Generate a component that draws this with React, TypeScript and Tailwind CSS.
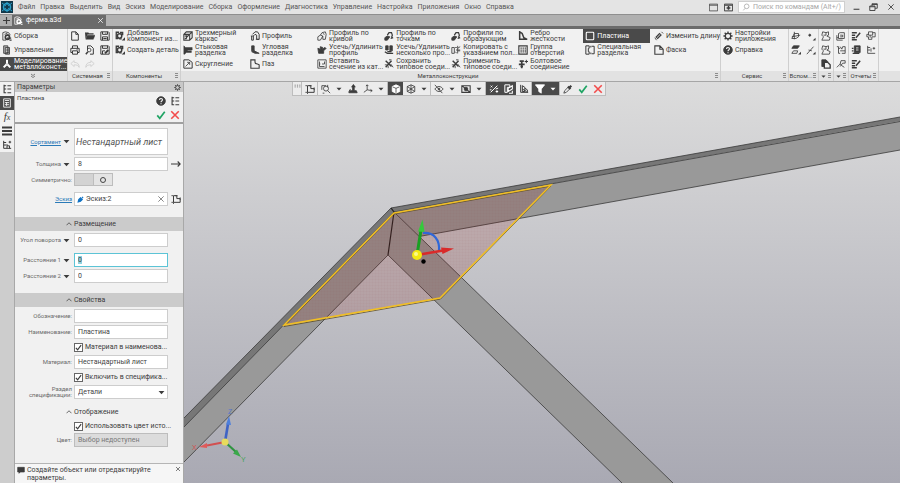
import { useState, type ReactNode } from "react";
import clsx from "clsx";

// иконки 12x12, обводка и заливка через currentColor
const icons: Record<string, ReactNode> = {
  assembly: (
    <>
      <path d="M1 11V2l3-1 4 1 2 3M1 11h4M3 4l3-1 2 2" />
      <circle cx="6.500" cy="7.500" r="2.500" strokeWidth="2" />
      <path d="M6 8.500h5M9 11h2.500" strokeWidth="1.500" />
    </>
  ),
  manage: (
    <>
      <path d="M2 1h5v9H2zM4 3v8h5V3z" fill="currentColor" fillOpacity=".35" />
      <path d="M5 5h3M5 7h3M5 9h3" />
    </>
  ),
  metal: (
    <>
      <path d="M6 1v5L2 10M6 6l4 4" strokeWidth="2.400" />
      <circle cx="6" cy="6" r="1" fill="#4a4a4a" />
    </>
  ),
  file: <path d="M2 1h5l3 3v7H2zM7 1v3h3" strokeWidth="1.200" />,
  folder: (
    <path d="M0 2h4l1 1h5v1H3L1 9zM3 5h9l-2 5H1z" fill="currentColor" strokeWidth=".5" />
  ),
  save: (
    <>
      <path d="M1 1h9l1 1v9H1zM3 1v3h6V1M3 11V7h6v4M4 9h4" strokeWidth="1.200" />
      <path d="M7 2v1" strokeWidth="1.500" />
    </>
  ),
  saveAs: (
    <>
      <path d="M1 1h9l1 1v9H1zM3 1v3h6V1M3 11V7h3" strokeWidth="1.200" />
      <path d="M6 10l4-4" strokeWidth="2.400" />
    </>
  ),
  print: <path d="M3 4V1h6v3M3 9H1V4h10v5H9M3 7h6v4H3zM8 5.500h1" strokeWidth="1.200" />,
  preview: (
    <>
      <path d="M3 6V1h4l3 3v7H6" strokeWidth="1.200" />
      <circle cx="5" cy="6" r="2.200" />
      <path d="M3.500 8L1 11" strokeWidth="1.800" />
    </>
  ),
  undo: <path d="M5 2L1 5.500 5 9V7c3 0 5 .500 6 3 0-4-2-6-6-6z" />,
  redo: <path d="M7 2l4 3.500L7 9V7c-3 0-5 .500-6 3 0-4 2-6 6-6z" />,
  gearAdd: (
    <>
      <path d="M5 1.500H1.500V9H4" strokeWidth="1.600" />
      <circle cx="5.500" cy="6" r="2.600" strokeWidth="1.800" />
      <path d="M6 1h4v4H8V3H6zM8 11.500h4v-4z" fill="currentColor" stroke="none" />
      <path d="M5 9.500h3" strokeWidth="1.500" />
    </>
  ),
  frame3d: (
    <>
      <path d="M1 4l3-3h7v7l-3 3H1zM1 4h7v7M8 4l3-3" strokeWidth="1.300" />
      <path d="M2 10l5-5M2 6h4M4 5v5" strokeWidth="1.300" />
    </>
  ),
  joint: (
    <path d="M1 1l2 2h8v3H6l-1 1h5v2H4l-2 2H1z" fill="currentColor" strokeWidth=".6" />
  ),
  fillet: (
    <>
      <path d="M1 1h6l4 3v7H1z" strokeWidth="1.200" />
      <path d="M3 9l5-5M5 4h3v3" />
    </>
  ),
  profile: (
    <>
      <path d="M3 4l3-3h3l2 3v6H8V5L6 4 4 6v5H2V6" strokeWidth="1.200" />
      <path d="M1 6h3M7 10h4" />
    </>
  ),
  corner: (
    <>
      <path d="M2 1h3v6H2z" fill="currentColor" />
      <path d="M2 8l3-1 6 3H6z" fill="currentColor" />
    </>
  ),
  groove: <path d="M1 1h5v3c0 2 2 2 3 2l2 1v4H1z" strokeWidth="1.300" />,
  curve: (
    <path d="M1 7l3-2 3 1-3 5H1zM4 5l2-3 4-1 1 3-1 6H7V6M7 3l2 1" />
  ),
  points: (
    <>
      <path d="M1 8l3-2 3 1-3 4H1z" fill="currentColor" />
      <path d="M4 5l2-3h3l1 3-1 3M8 9l3-1" strokeWidth="1.500" />
    </>
  ),
  trim: <path d="M1 4l3 1V2l3 1-1 3 3-3 2 1-3 3v3H2z" fill="currentColor" />,
  trimMany: (
    <>
      <path d="M2 1h3v5H2zM7 1h3v6H7z" fill="currentColor" />
      <path d="M1 8l3 2h7M4 8h5" strokeWidth="1.500" />
    </>
  ),
  insert: <path d="M1 1h10v10H1zM3 3v6h6M6 6h3V3M3 6h1" />,
  tools: (
    <>
      <path d="M2 2l7 7M9 2L2 10" strokeWidth="1.700" />
      <path d="M6 1h3M1 7h3M8 6l3 4M5 8v3" />
    </>
  ),
  copyPt: <path d="M1 3h3v7H1zM5 3h2M8 1v9M8 4l3-2M8 7h3M5 8l2 2M6 6h5" />,
  rib: <path d="M2 1v9h9L7 8 5 3z" strokeWidth="1.800" />,
  holes: (
    <>
      <path d="M1 1h10v10H1z" strokeWidth="1.400" />
      <path d="M3 3.700h1.500M5.500 3.700H7M8 3.700h1.500M3 6h1.500M5.500 6H7M8 6h1.500M3 8.300h1.500M5.500 8.300H7M8 8.300h1.500" strokeWidth="1.500" />
    </>
  ),
  bolt: (
    <>
      <path d="M2 2.500h5M4.500 3v8M1 6.500h7M3 9h3" strokeWidth="2" />
      <path d="M8 3h4M10 1v4" strokeWidth="1.200" />
    </>
  ),
  plate: <rect x="1.500" y="1.500" width="9" height="9" rx="1" strokeWidth="1.300" />,
  special: <path d="M5 1H1v10h4V8H4V4h1zM8 1.500h3v9H8M7 1v2M7 9v2" strokeWidth="1.200" />,
  length: (
    <>
      <path d="M3 8.500l5-5" strokeWidth="4" />
      <path d="M3.500 8l4-4" stroke="#f1f1f1" />
      <path d="M9 1l2 2M1 8l2 3" />
    </>
  ),
  chamfer: <path d="M1 1h6l4 4v6H1zM7 1v4h4" strokeWidth="1.300" />,
  gear: (
    <>
      <circle cx="6" cy="6" r="3.300" strokeWidth="1.500" />
      <path d="M6 .500v2M6 9.500v2M.500 6h2M9.500 6h2M2 2l1.500 1.500M8.500 8.500L10 10M10 2L8.500 3.500M3.500 8.500L2 10" strokeWidth="1.600" />
    </>
  ),
  help: (
    <>
      <circle cx="6" cy="6" r="5.200" fill="currentColor" />
      <path d="M4.300 4.700C4.300 2.300 8 2.500 7.700 4.800 7.500 6 6 6 6 7.500M6 8.600v1.200" stroke="#f1f1f1" strokeWidth="1.400" />
    </>
  ),
  plane: <path d="M4 1v9M1 7l10-2M4 3h5v4L6 9H1l3-6" />,
  dot: (
    <>
      <circle cx="4.500" cy="5" r="1.200" fill="currentColor" />
      <path d="M11.500 8v3.500H8z" fill="currentColor" stroke="none" />
    </>
  ),
  planes: (
    <>
      <path d="M3 1h7L8 4H1z" fill="currentColor" />
      <path d="M3 7h5l-1 3H1z" />
      <path d="M12 8v3.500H8.500z" fill="currentColor" stroke="none" />
    </>
  ),
  axis: (
    <>
      <path d="M1 11l8-9M3 6l4 1" />
      <path d="M11.500 8v3.500H8z" fill="currentColor" stroke="none" />
    </>
  ),
  shape: <path d="M2 1l4 1 3-1v4L7 6l4 2-1 3H1l2-4-2-2zM6 2v3H3" />,
  solid: (
    <>
      <path d="M1 1h5l2 2v6H1z" fill="currentColor" />
      <path d="M4 4h4l3 3v4H4z" fill="#f1f1f1" strokeWidth="1.600" />
    </>
  ),
  dims: <path d="M1 5v6h7M3 3v6h7V2H5zM5 5h3v2H5M1 8h2" />,
  sheet: <path d="M1 2h2v8h2M3 4h2M5 2l2 3 1-3h3v8H7M5 7h6" />,
  branch: <path d="M1 10l4-4 2 2 3 2M5 6l1-4h5v3H8L5 9" />,
  report: (
    <>
      <path d="M1 2h6M1 5h4M1 8h4M1 10.500h6" strokeWidth="1.700" />
      <path d="M6 8l5-6" strokeWidth="1.800" />
    </>
  ),
  reportSave: (
    <>
      <path d="M4 1h7v8H4z" fill="currentColor" />
      <path d="M1 4h2M1 7h2M2 10h8" strokeWidth="1.500" />
      <path d="M6 3.500h3M6 6h3" stroke="#f1f1f1" />
    </>
  ),
  reportCopy: <path d="M3 1h5v4H3zM8 2h3v5H7v3H3V7H1V4h2M5 5v3" />,
  reportAdd: <path d="M2 1v9h9M2 3h3M2 6h3M6 8V4M8 4h3M9.500 2.500v3" />,
  tree: <path d="M2.500 1v9.500H5M2.500 2H5M2.500 6H5M6.500 2H11M6.500 6H11M6.500 10.500H11" strokeWidth="1.300" />,
  table: <path d="M2 1h8v10H2zM3.500 3h5M3.500 5.500h5M3.500 8h5M5.500 5v4.500" />,
  layers: <path d="M0 1.800h12M0 6h12M0 10.200h12" strokeWidth="2.600" />,
  treeAdd: <path d="M2 1v9h9M2 3h3M2 6h3M6 5v5M9 10V7H6M8 2.500h3M9.500 1v3" strokeWidth="1.200" />,
  sketch: (
    <>
      <path d="M3 2v8h8V5.500H7V2z" strokeWidth="1.200" />
      <path d="M.500 2h2M3 10v2M.500 10h2M5 2h3M11 4v3" />
    </>
  ),
  find: (
    <>
      <path d="M1 2h5M1 2v5M8 1v3M2 11h2" />
      <circle cx="6" cy="5.500" r="3" />
      <path d="M8 8l3 3" />
    </>
  ),
  orient: (
    <>
      <path d="M6.500 0l3 4H8v4H5V4H3.500z" fill="currentColor" stroke="none" />
      <path d="M2 8h8l1 2.500H1z" fill="currentColor" />
      <path d="M3 6L1 9" />
    </>
  ),
  triad: <path d="M5 1v6l-4 3M5 7l6 1M3.500 2.500L5 1l1.500 1.500M9 6.500L11 8l-2 1.500" />,
  cube: (
    <>
      <path d="M1.500 3L6 1l4.500 2v6L6 11 1.500 9z" fill="currentColor" />
      <path d="M2 3.500L6 5.200l4-1.700M6 5v5.500" stroke="#4a4a4a" />
    </>
  ),
  wire: <path d="M1.500 3L6 1l4.500 2v6L6 11 1.500 9zM1.500 3l9 6M10.500 3l-9 6M6 1v10" />,
  eyeOff: (
    <>
      <path d="M1 6c3-4 7-4 10 0-3 4-7 4-10 0zM1 1l9 10" />
      <circle cx="6" cy="6" r="1" fill="currentColor" />
    </>
  ),
  section: (
    <>
      <path d="M1 2h10v8H1zM1 2l10 8" strokeWidth="1.300" />
      <circle cx="6" cy="6" r="2.200" fill="currentColor" />
    </>
  ),
  snap: <path d="M2 10l8-8M2 2l2 2M4 2L2 4M8 9h3M9.500 7.500v3M1 7h2M8 6l3-1" strokeWidth="1.200" />,
  rebuild: (
    <>
      <path d="M1 1h6v3H4v6H1z" strokeWidth="1.200" />
      <path d="M5 5l5-3v4L5 9zM6 11h4V8" strokeWidth="1.300" />
    </>
  ),
  layersOn: <path d="M2 1v9h9M4 2l3 2v5H4zM7 5l3 2v3M4 6l5 3" strokeWidth="1.200" />,
  filter: <path d="M.500 1h11L7.500 6v5L4.500 9V6z" fill="currentColor" />,
  dropper: (
    <>
      <path d="M1 11l1-3 4-4 2 2-4 4z" />
      <path d="M6 3l3 3M8 4l2-2" strokeWidth="2.500" />
    </>
  ),
  ok: <path d="M1.500 6.500l3 3.500 6-8" strokeWidth="2" />,
  cancel: <path d="M1.500 1.500l9 9M10.500 1.500l-9 9" strokeWidth="1.900" />,
  close: <path d="M2 2l8 8M10 2l-8 8" strokeWidth="1.300" />,
  arrow: <path d="M0 6h11M8 3l3 3-3 3" strokeWidth="1.300" />,
  up: <path d="M1 8.500l5-5 5 5" strokeWidth="1.500" />,
  more: <path d="M2 2l4 3 4-3M2 6l4 3 4-3" strokeWidth="1.200" />,
  down: <path d="M1 3.500h10L6 9z" fill="currentColor" stroke="none" />,
  pencil: <path d="M2 10l1-4 3-3 3 3-3 3zM8.500 1.500l2 2" fill="currentColor" strokeWidth="2" />,
  message: <path d="M1 2h10v7H5l-2 2V9H1z" fill="currentColor" />,
  window: <path d="M.500 1.500h11v9H.500zM.500 3h11" />,
  camera: (
    <>
      <path d="M.500 1.500h11v9H.500zM1 3h10" strokeWidth="1.300" />
      <path d="M6 4v5M3.500 6.500h5" strokeWidth="2" />
    </>
  ),
  search: (
    <>
      <circle cx="7" cy="5" r="3.500" />
      <path d="M4.500 8L2 11" />
    </>
  ),
  restore: <path d="M1 4h7v6H1zM1 5h7M4 4V1h7v6H8M4 2h7" strokeWidth="1.200" />,
  minimize: <path d="M1 9h10" strokeWidth="1.800" />,
  plus: <path d="M6 0v12M0 6h12" strokeWidth="2" />,
  grip: <path d="M1 2h2M5 2h2M9 2h2M1 5h2M5 5h2M9 5h2" />,
};

const Icon = ({ name, className = "size-[10px]" }: { name: string; className?: string }) => (
  <svg
    viewBox="0 0 12 12"
    fill="none"
    stroke="currentColor"
    strokeWidth="1"
    aria-hidden="true"
    className={clsx("shrink-0", className)}
  >
    {icons[name]}
  </svg>
);

const Grip = () => (
  <svg viewBox="0 0 3 6" className="h-[6px] w-[3px] shrink-0 text-[#8c8c8c]" aria-hidden="true">
    <path d="M0 .500h3M0 2.500h3M0 4.500h3" stroke="currentColor" />
  </svg>
);

const menu = [
  "Файл", "Правка", "Выделить", "Вид", "Эскиз", "Моделирование", "Сборка", "Оформление",
  "Диагностика", "Управление", "Настройка", "Приложения", "Окно", "Справка",
];

type Cmd = { icon: string; text: string; active?: boolean };

const components: Cmd[] = [
  { icon: "gearAdd", text: "Добавить\nкомпонент из..." },
  { icon: "gearAdd", text: "Создать деталь" },
];

const metal: Cmd[] = [
  { icon: "frame3d", text: "Трехмерный\nкаркас" },
  { icon: "joint", text: "Стыковая\nразделка" },
  { icon: "fillet", text: "Скругление" },
  { icon: "profile", text: "Профиль" },
  { icon: "corner", text: "Угловая\nразделка" },
  { icon: "groove", text: "Паз" },
  { icon: "curve", text: "Профиль по\nкривой" },
  { icon: "trim", text: "Усечь/Удлинить\nпрофиль" },
  { icon: "insert", text: "Вставить\nсечение из кат..." },
  { icon: "points", text: "Профиль по\nточкам" },
  { icon: "trimMany", text: "Усечь/Удлинить\nнесколько про..." },
  { icon: "tools", text: "Сохранить\nтиповое соеди..." },
  { icon: "points", text: "Профили по\nобразующим" },
  { icon: "copyPt", text: "Копировать с\nуказанием пол..." },
  { icon: "tools", text: "Применить\nтиповое соеди..." },
  { icon: "rib", text: "Ребро\nжесткости" },
  { icon: "holes", text: "Группа\nотверстий" },
  { icon: "bolt", text: "Болтовое\nсоединение" },
];

const metalTail: Cmd[] = [
  { icon: "plate", text: "Пластина", active: true },
  { icon: "special", text: "Специальная\nразделка" },
];

const metalEdit: Cmd[] = [
  { icon: "length", text: "Изменить длину" },
  { icon: "chamfer", text: "Фаска" },
];

const service: Cmd[] = [
  { icon: "gear", text: "Настройки\nприложения" },
  { icon: "help", text: "Справка" },
];

const Command = ({ icon, text, active }: Cmd) => (
  <button
    className={clsx(
      "flex h-[14px] w-full items-center gap-[2px] pl-[2px] text-left leading-[6px] whitespace-pre",
      active && "bg-[#4a4a4a] text-white",
    )}
  >
    <Icon name={icon} />
    {text}
  </button>
);

type GroupProps = { title: ReactNode; className?: string; children: ReactNode; grip?: boolean };

const Group = ({ title, className, children, grip = true }: GroupProps) => (
  <section className={clsx("flex shrink-0 flex-col border-r border-[#cfcfcf]", className)}>
    <div className="flex h-[42px]">{children}</div>
    <div className="flex h-[10px] items-center bg-[#e2e2e2] pr-[2px] text-[6px] leading-[8px]">
      <span className="flex flex-1 justify-center whitespace-nowrap">{title}</span>
      {grip && <Grip />}
    </div>
  </section>
);

const IconGrid = ({ names, className }: { names: string[]; className: string }) => (
  <div className={clsx("grid flex-1 grid-rows-[14px_14px_14px] place-items-center", className)}>
    {names.map((name, i) => (
      <button key={i} aria-label={name} className={clsx(["undo", "redo"].includes(name) && "text-[#cccccc]")}>
        <Icon name={name} />
      </button>
    ))}
  </div>
);

const Ribbon = () => (
  <div className="flex overflow-hidden border-b border-[#a6a6a6] bg-[#f1f1f1]">
    <Group title={<Icon name="more" className="size-[6px]" />} className="w-[68px]" grip={false}>
      <div className="flex-1">
        <Command icon="assembly" text="Сборка" />
        <Command icon="manage" text="Управление" />
        <Command icon="metal" text={"Моделирование\nметаллоконст..."} active />
      </div>
    </Group>
    <Group title="Системная" className="w-[45px]">
      <IconGrid
        className="grid-cols-3"
        names={["file", "folder", "save", "print", "preview", "saveAs", "undo", "redo"]}
      />
    </Group>
    <Group title="Компоненты" className="w-[68px]">
      <div className="flex-1">
        {components.map((c) => <Command key={c.text} {...c} />)}
      </div>
    </Group>
    <Group title="Металлоконструкции" className="w-[540px]">
      <div className="grid w-[405px] grid-flow-col grid-cols-6 grid-rows-3">
        {metal.map((c) => <Command key={c.text} {...c} />)}
      </div>
      <div className="w-[67px]">
        {metalTail.map((c) => <Command key={c.text} {...c} />)}
      </div>
      <div className="flex-1 pl-[2px]">
        {metalEdit.map((c) => <Command key={c.text} {...c} />)}
      </div>
    </Group>
    <Group title="Сервис" className="w-[68px]">
      <div className="flex-1">
        {service.map((c) => <Command key={c.text} {...c} />)}
      </div>
    </Group>
    <Group title="Вспом..." className="w-[30px]">
      <IconGrid className="grid-cols-2" names={["plane", "dot", "planes", "axis"]} />
    </Group>
    <Group title={<Icon name="down" className="size-[5px]" />} className="w-[15px]">
      <IconGrid className="grid-cols-1" names={["shape", "shape", "solid"]} />
    </Group>
    <Group title={<Icon name="down" className="size-[5px]" />} className="w-[15px]">
      <IconGrid className="grid-cols-1" names={["dims", "sheet", "branch"]} />
    </Group>
    <Group title="Отчеты" className="w-[30px]">
      <IconGrid
        className="grid-cols-2"
        names={["report", "reportCopy", "reportSave", "reportAdd", "report"]}
      />
    </Group>
    <div className="flex flex-1 flex-col justify-end">
      <div className="h-[10px] bg-[#e2e2e2]" />
    </div>
  </div>
);

const inputClass = "h-[14px] w-full min-w-0 border border-[#cdcdcd] bg-white px-[3px] text-[#444]";

type FieldProps = {
  id: string;
  label: string;
  link?: boolean;
  arrow?: boolean;
  after?: ReactNode;
  children: ReactNode;
};

const Field = ({ id, label, link, arrow, after, children }: FieldProps) => (
  <div className="flex items-center">
    <div className="mr-[2px] flex w-[57px] shrink-0 items-center justify-end gap-[2px]">
      <label
        htmlFor={id}
        className={clsx(
          "text-right text-[6px] leading-[6px] whitespace-pre",
          link ? "text-[#2a7ab8] underline" : "text-[#6a6a6a]",
        )}
      >
        {label}
      </label>
      {arrow && <Icon name="down" className="mr-[2px] size-[7px]" />}
    </div>
    <div className="min-w-0 flex-1">{children}</div>
    <div className="flex w-[15px] shrink-0 justify-center">{after}</div>
  </div>
);

const TextField = ({ value = "", ...rest }: Omit<FieldProps, "children"> & { value?: string }) => (
  <Field {...rest}>
    <input id={rest.id} type="text" defaultValue={value} className={inputClass} />
  </Field>
);

const Check = ({ text }: { text: string }) => {
  const [on, setOn] = useState(true);
  return (
    <label className="ml-[59px] flex h-[10px] items-center gap-[2px] whitespace-nowrap">
      <span className="grid shrink-0 place-items-center">
        <input
          type="checkbox"
          checked={on}
          onChange={() => setOn(!on)}
          className="col-start-1 row-start-1 size-[9px] appearance-none border border-[#666] bg-white"
        />
        {on && <Icon name="ok" className="pointer-events-none col-start-1 row-start-1 size-[7px]" />}
      </span>
      {text}
    </label>
  );
};

const SectionTitle = ({ text, plain }: { text: string; plain?: boolean }) => (
  <button
    className={clsx(
      "flex w-full items-center gap-[2px] pl-[51px]",
      plain ? "h-[10px]" : "h-[14px] bg-[#cbcbcb]",
    )}
  >
    <Icon name="up" className="size-[6px]" />
    {text}
  </button>
);

const Params = () => (
  <aside className="flex w-[170px] shrink-0 flex-col border-x border-[#a8a8a8] bg-[#f1f1f1]">
    <div className="flex h-[10px] items-center justify-between bg-[#c8c8c8] px-[2px]">
      <h2>Параметры</h2>
      <Icon name="gear" className="size-[7px]" />
    </div>
    <div className="flex h-[32px] justify-between border-b-2 border-[#a0a0a0] pt-[2px] pr-[3px] pl-[2px]">
      <h3 className="text-[6px] leading-[8px]">Пластина</h3>
      <div className="grid grid-cols-2 place-items-center gap-x-[4px]">
        <button aria-label="Справка"><Icon name="help" /></button>
        <button aria-label="Дерево"><Icon name="tree" /></button>
        <button aria-label="Создать" className="text-[#20a464]"><Icon name="ok" /></button>
        <button aria-label="Отмена" className="text-[#f24b4b]"><Icon name="cancel" /></button>
      </div>
    </div>

    <div className="flex flex-col gap-[2px] pt-[4px] pb-[11px]">
      <Field id="assortment" label="Сортамент" link arrow>
        <input
          id="assortment"
          readOnly
          value="Нестандартный лист"
          className="h-[27px] w-full border border-[#cdcdcd] bg-white px-[1px] text-[9px] text-[#555] italic"
        />
      </Field>
      <TextField id="thickness" label="Толщина" arrow value="8" after={<Icon name="arrow" />} />
      <Field id="symmetry" label="Симметрично:">
        <button
          id="symmetry"
          role="switch"
          aria-checked="false"
          className="flex h-[13px] w-[39px] border border-[#bdbdbd] bg-[#d3d3d3]"
        >
          <span className="ml-auto flex h-full w-[19px] items-center justify-center border-l border-[#bdbdbd] bg-[#e4e4e4]">
            <span className="size-[6px] rounded-full border border-[#444]" />
          </span>
        </button>
      </Field>
      <div className="pt-[4px]">
        <Field id="sketch" label="Эскиз" link after={<Icon name="sketch" />}>
          <div className="flex h-[14px] items-center gap-[2px] border border-[#cdcdcd] bg-white px-[2px]">
            <Icon name="pencil" className="size-[7px] text-[#1273c4]" />
            <input id="sketch" readOnly value="Эскиз:2" className="w-0 min-w-0 flex-1" />
            <button aria-label="Очистить" className="text-[#777]"><Icon name="close" className="size-[8px]" /></button>
          </div>
        </Field>
      </div>
    </div>

    <SectionTitle text="Размещение" />
    <div className="flex flex-col gap-[2px] pt-[2px] pb-[10px]">
      <TextField id="angle" label="Угол поворота" arrow value="0" />
      <div className="pt-[4px]">
        <Field id="distance1" label="Расстояние 1" arrow>
          <input
            id="distance1"
            type="text"
            defaultValue="0"
            autoFocus
            onFocus={(e) => e.target.select()}
            className="h-[14px] w-full border border-[#5cc4d6] bg-white px-[3px] text-[#444] outline-none selection:bg-[#8fd3e0]"
          />
        </Field>
      </div>
      <TextField id="distance2" label="Расстояние 2" arrow value="0" />
    </div>

    <SectionTitle text="Свойства" />
    <div className="flex flex-col gap-[2px] pt-[2px] pb-[8px]">
      <TextField id="mark" label="Обозначение:" />
      <TextField id="title" label="Наименование:" value="Пластина" />
      <div className="py-[1px]"><Check text="Материал в наименова..." /></div>
      <TextField id="material" label="Материал:" value="Нестандартный лист" />
      <div className="py-[1px]"><Check text="Включить в специфика..." /></div>
      <Field id="section" label={"Раздел\nспецификации:"}>
        <div className="grid items-center">
          <select
            id="section"
            className="col-start-1 row-start-1 h-[14px] w-full appearance-none border border-[#cdcdcd] bg-white px-[3px] text-[#444]"
          >
            <option>Детали</option>
          </select>
          <Icon
            name="down"
            className="pointer-events-none col-start-1 row-start-1 mr-[3px] size-[7px] justify-self-end"
          />
        </div>
      </Field>
    </div>

    <SectionTitle text="Отображение" plain />
    <div className="flex flex-col gap-[2px] pt-[4px]">
      <Check text="Использовать цвет исто..." />
      <Field id="color" label="Цвет:">
        <input
          id="color"
          disabled
          value="Выбор недоступен"
          className="h-[14px] w-full border border-[#bdbdbd] bg-[#dcdcdc] px-[3px] text-[#777]"
        />
      </Field>
    </div>

    <div className="mt-auto flex items-start gap-[2px] border-t border-[#b5b5b5] bg-[#f6f6f6] px-[2px] pt-[2px] pb-[1px]">
      <Icon name="message" className="size-[8px]" />
      <p className="flex-1 leading-[8px]">
        Создайте объект или отредактируйте
        <br />
        параметры.
      </p>
      <button aria-label="Закрыть"><Icon name="close" className="size-[6px]" /></button>
    </div>
  </aside>
);

const Rail = () => (
  <nav className="w-[14px] shrink-0 bg-[#cdcdcd]">
    <div className="flex flex-col bg-[#f1f1f1]">
      {["tree", "table", "fx", "layers", "treeAdd"].map((name) => (
        <button
          key={name}
          aria-label={name}
          className={clsx(
            "flex h-[14px] items-center justify-center",
            name === "table" && "bg-[#4a4a4a] text-white",
          )}
        >
          {name === "fx" ? (
            <span className="font-['Liberation_Serif',serif] text-[11px] italic">
              f<span className="text-[8px]">x</span>
            </span>
          ) : (
            <Icon name={name} />
          )}
        </button>
      ))}
    </div>
  </nav>
);

const ToolBtn = ({ name, dark, arrow, color }: { name: string; dark?: boolean; arrow?: boolean; color?: string }) => (
  <button
    aria-label={name}
    className={clsx("flex h-[13px] items-center", dark && "bg-[#4a4a4a] text-white", color)}
  >
    <span className="flex w-[15px] justify-center"><Icon name={name} /></span>
    {arrow && <span className="flex w-[12px] justify-center"><Icon name="down" className="size-[6px]" /></span>}
  </button>
);

const ViewToolbar = () => (
  <div className="absolute top-0 left-[108px] flex divide-x divide-[#bdbdbd] border border-t-0 border-[#bdbdbd] bg-[#ececec]">
    <div className="flex w-[9px] justify-center pt-[2px]"><Icon name="grip" className="size-[7px]" /></div>
    <div className="flex"><ToolBtn name="sketch" /></div>
    <div className="flex">
      <ToolBtn name="find" arrow />
      <ToolBtn name="orient" />
      <ToolBtn name="triad" arrow />
    </div>
    <div className="flex">
      <ToolBtn name="cube" dark />
      <ToolBtn name="wire" arrow />
    </div>
    <div className="flex">
      <ToolBtn name="eyeOff" arrow />
      <ToolBtn name="section" arrow />
    </div>
    <div className="flex">
      <ToolBtn name="snap" dark />
      <ToolBtn name="rebuild" dark />
      <ToolBtn name="layersOn" />
    </div>
    <div className="flex">
      <ToolBtn name="filter" dark arrow />
    </div>
    <div className="flex">
      <ToolBtn name="dropper" />
      <ToolBtn name="ok" color="text-[#20a464]" />
      <ToolBtn name="cancel" color="text-[#f24b4b]" />
    </div>
  </div>
);

// 3D-вид: ферма, пластина, манипулятор и оси
const Scene = () => (
  <svg
    viewBox="184 82 716 401"
    preserveAspectRatio="xMidYMid slice"
    className="absolute inset-0 size-full"
    fontFamily="Liberation Sans, sans-serif"
    fontSize="7"
  >
    <defs>
      <pattern id="mesh" width="3" height="3" patternUnits="userSpaceOnUse">
        <path d="M0 0H3M0 0V3" stroke="#803030" strokeOpacity=".08" strokeWidth=".6" />
      </pattern>
    </defs>
    <g fill="#999999">
      <path d="M394 212L900 121V150L419 236.500z" />
      <path d="M394 212L184 427V462L388 255z" />
      <path d="M394 212L673 483H622L388 255z" />
    </g>
    <path d="M391 208L900 117V121L394 212L184 427V418z" fill="#777777" />
    <g fill="none" stroke="#3a3a3a" strokeWidth=".8">
      <path d="M184 418L391 208L900 117M184 427L394 212L900 121.500" />
      <path d="M184 462L388 255L622 483M394 212L673 483M419 236.500L900 150" />
      <path d="M391 208L394 212L388 255" stroke="#222" strokeWidth="1.200" />
    </g>
    <path d="M394 213L551 185L440 298L284 325z" fill="#821410" fillOpacity=".18" />
    <path d="M394 213L551 185L440 298L284 325z" fill="url(#mesh)" />
    <path d="M394 214L551 186L440.500 299L284 326.500z" fill="none" stroke="#5a4a20" strokeWidth=".8" />
    <path d="M394 213L551 185L440 298L284 325z" fill="none" stroke="#f2bf22" strokeWidth="1.500" />

    <path d="M423 233C434 232 440 240 439 251" fill="none" stroke="#2f67d8" strokeWidth="2.200" />
    <path d="M417 255L421 230" stroke="#19a022" strokeWidth="3" />
    <path d="M422.500 219.500L424.500 232L418 231.500z" fill="#35c93c" />
    <path d="M417 255L443 250.500" stroke="#d92a2a" strokeWidth="2.600" />
    <path d="M454 248.500L441 247.500L442.500 254z" fill="#d92a2a" />
    <circle cx="417" cy="255" r="5" fill="#f4ea12" />
    <circle cx="416" cy="254" r="2" fill="#fdfb8a" />
    <circle cx="423.500" cy="261.500" r="2.200" fill="#000" />

    <path d="M225 442L228 424" stroke="#3f63c4" strokeWidth="2.600" />
    <path d="M229 416L231 425L226 424.500z" fill="#4d7fdc" />
    <path d="M225 442L207 445.500" stroke="#d25050" strokeWidth="2.200" />
    <path d="M199 447L207 443V448z" fill="#e05a5a" />
    <path d="M225 442L236 452" stroke="#2f9440" strokeWidth="2.200" />
    <path d="M241 457L233 453.500L237 449.500z" fill="#3aa84a" />
    <circle cx="225" cy="442" r="3.500" fill="#e8dc5c" />
    <text x="228" y="414" fill="#5674c8">Z</text>
    <text x="192" y="450" fill="#d45252">X</text>
    <text x="241" y="462" fill="#45a355">Y</text>
  </svg>
);

export default function App() {
  return (
    <div className="flex min-h-screen flex-col bg-[#e4e4e4] font-['Roboto','Noto_Sans',sans-serif] text-[7px] leading-[9px] text-[#3c3c3c]">
      <header className="flex h-[14px] items-center">
        <svg viewBox="0 0 12 12" className="mx-[1px] size-[12px] shrink-0" aria-hidden="true">
          <rect width="12" height="12" fill="#12384a" />
          <circle cx="6" cy="6" r="3.500" fill="none" stroke="#2a9fc9" strokeWidth="1.500" />
          <path d="M1 2l4 3M11 2L7 5M1 10l4-3M11 10L7 7M6 1v3M6 8v3" stroke="#2a9fc9" />
        </svg>
        <nav className="ml-[4px] flex gap-[5px] whitespace-nowrap text-[#555]">
          {menu.map((item) => <button key={item}>{item}</button>)}
        </nav>
        <div className="ml-auto flex items-center">
          <button aria-label="Окна"><Icon name="window" className="size-[9px]" /></button>
          <button aria-label="Снимок" className="ml-[6px]"><Icon name="camera" className="size-[9px]" /></button>
          <div className="ml-[5px] flex h-[12px] w-[107px] items-center gap-[3px] border border-[#cfcfcf] bg-white pl-[3px] text-[#999]">
            <Icon name="search" className="size-[8px]" />
            <input
              type="text"
              aria-label="Поиск по командам"
              placeholder="Поиск по командам (Alt+/)"
              className="w-0 min-w-0 flex-1 placeholder:text-[#a8a8a8]"
            />
          </div>
          <div className="flex gap-[9px] pr-[5px] pl-[8px]">
            <button aria-label="Свернуть"><Icon name="minimize" className="size-[7px]" /></button>
            <button aria-label="Восстановить"><Icon name="restore" className="size-[9px]" /></button>
            <button aria-label="Закрыть"><Icon name="close" className="size-[8px]" /></button>
          </div>
        </div>
      </header>

      <div className="flex h-[15px] border-t border-b-3 border-t-[#8f8f8f] border-b-[#6b6b6b] bg-[#b0b0b0]">
        <button aria-label="Новый документ" className="flex w-[12px] items-center justify-center bg-[#b0b0b0]">
          <Icon name="plus" className="size-[7px]" />
        </button>
        <div className="flex w-[94px] items-center gap-[3px] bg-[#6b6b6b] px-[2px] text-white">
          <Icon name="assembly" className="size-[9px]" />
          <span className="flex-1">ферма.a3d</span>
          <button aria-label="Закрыть вкладку"><Icon name="close" className="size-[7px]" /></button>
        </div>
      </div>

      <Ribbon />

      <div className="flex flex-1">
        <Rail />
        <Params />
        <main className="relative flex-1 overflow-hidden bg-linear-to-b from-[#dcdcdc] to-[#a9a9b3]">
          <Scene />
          <ViewToolbar />
        </main>
      </div>
    </div>
  );
}
